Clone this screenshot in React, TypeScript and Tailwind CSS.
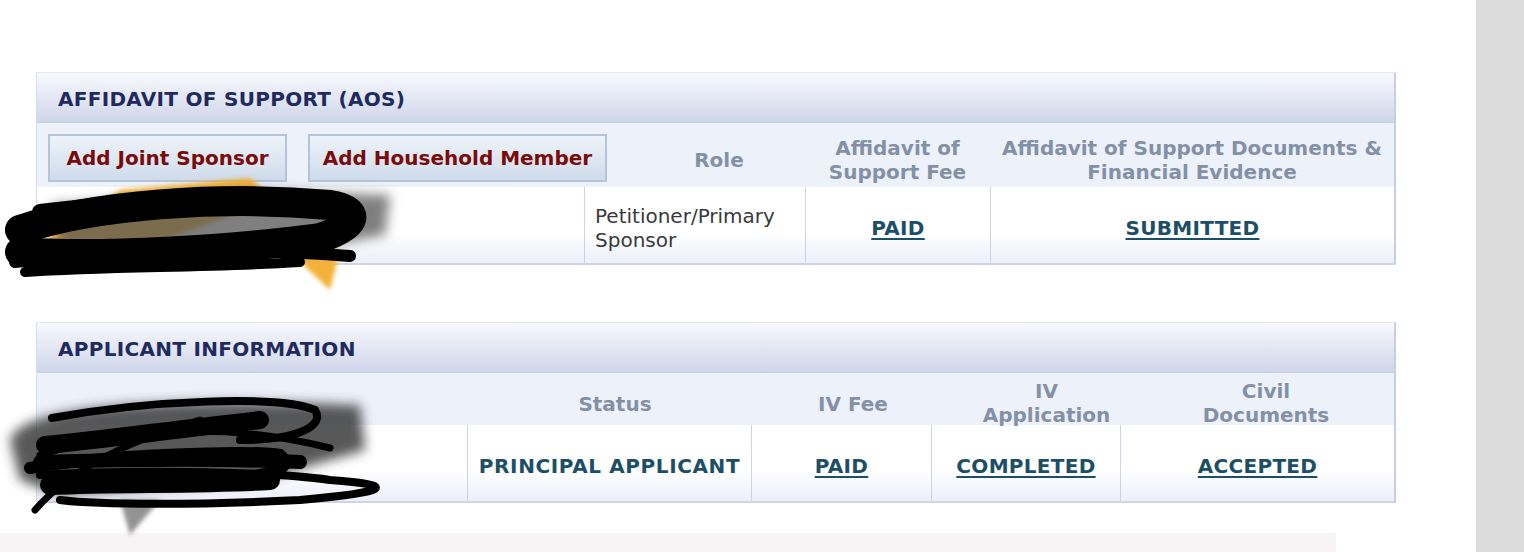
import React from 'react';

const font = "font-['DejaVu_Sans','Verdana',sans-serif]";

const Scribbles: React.FC = () => (
  <svg className="absolute left-0 top-0 pointer-events-none" width="1524" height="552" viewBox="0 0 1524 552">
    <defs>
      <filter id="soft" x="-20%" y="-50%" width="140%" height="200%">
        <feGaussianBlur stdDeviation="6" />
      </filter>
      <filter id="softer" x="-20%" y="-50%" width="140%" height="200%">
        <feGaussianBlur stdDeviation="2" />
      </filter>
    </defs>
    {/* first redaction */}
    <g>
      <path d="M30 250 L120 190 L250 178 L275 200 L80 270 Z" fill="#f3b33a" filter="url(#softer)" />
      <path d="M240 240 L340 250 L330 290 L300 262 Z" fill="#f3b33a" filter="url(#softer)" />
      <path d="M50 205 L250 190 L390 195 L385 235 L300 250 L60 250 Z" fill="#555" opacity="0.75" filter="url(#soft)" />
      <path d="M20 230 C90 205 220 195 330 205 C360 210 360 225 320 238 C230 250 100 258 20 252" stroke="#000" strokeWidth="30" fill="none" strokeLinecap="round" />
      <path d="M15 262 C120 250 250 248 350 256" stroke="#000" strokeWidth="12" fill="none" strokeLinecap="round" />
      <path d="M40 212 C150 198 260 195 340 210" stroke="#000" strokeWidth="16" fill="none" strokeLinecap="round" />
      <path d="M25 272 C110 266 200 268 300 262" stroke="#000" strokeWidth="10" fill="none" strokeLinecap="round" />
    </g>
    {/* second redaction */}
    <g>
      <path d="M10 440 C20 410 120 395 360 405 L365 450 L260 480 L60 495 L20 480 Z" fill="#3a3a3a" opacity="0.85" filter="url(#soft)" />
      <path d="M120 500 L160 500 L130 535 Z" fill="#666" opacity="0.7" filter="url(#softer)" />
      <path d="M52 418 C150 400 280 395 315 410 C325 425 300 440 240 440" stroke="#000" strokeWidth="8" fill="none" strokeLinecap="round" />
      <path d="M40 455 C120 430 220 420 330 448" stroke="#000" strokeWidth="7" fill="none" strokeLinecap="round" />
      <path d="M30 468 C100 455 250 450 280 455 C300 470 260 480 180 482" stroke="#000" strokeWidth="12" fill="none" strokeLinecap="round" />
      <path d="M40 475 C120 470 260 470 330 480 C400 485 390 492 300 500 C200 505 100 505 60 500" stroke="#000" strokeWidth="8" fill="none" strokeLinecap="round" />
      <path d="M35 510 C70 470 130 440 200 420" stroke="#000" strokeWidth="7" fill="none" strokeLinecap="round" />
      <path d="M45 445 C100 440 170 430 260 420" stroke="#000" strokeWidth="18" fill="none" strokeLinecap="round" />
      <path d="M50 485 C120 482 200 484 270 480" stroke="#000" strokeWidth="20" fill="none" strokeLinecap="round" />
      <path d="M40 462 C110 460 200 458 300 462" stroke="#000" strokeWidth="14" fill="none" strokeLinecap="round" />
    </g>
  </svg>
);

const SectionHeader: React.FC<{ title: string }> = ({ title }) => (
  <div className="h-[50px] flex items-center pt-[3px] pl-[21px] border-b border-[#c9d0e2] bg-gradient-to-b from-[#f8f9fd] to-[#cfd6ea]">
    <h2 className="text-[20px] font-bold text-[#1f2a5e] leading-none tracking-[0.3px]">{title}</h2>
  </div>
);

const Link: React.FC<{ children: React.ReactNode }> = ({ children }) => (
  <a className="text-[20px] font-bold text-[#1c4f66] tracking-[0.3px] underline underline-offset-[3px] decoration-2">{children}</a>
);

const JointButton: React.FC<{ label: string; w: string }> = ({ label, w }) => (
  <button className={`${w} h-[48px] border-2 border-[#b3c5d8] bg-gradient-to-b from-[#eef3f9] to-[#cfdceb] text-[20px] font-bold text-[#7b0b0b] text-center`}>
    {label}
  </button>
);

const ColHead: React.FC<{ children: React.ReactNode; className?: string }> = ({ children, className = '' }) => (
  <div className={`text-[20px] font-bold text-[#8391a6] leading-[24px] text-center ${className}`}>{children}</div>
);

const rowBg = 'bg-gradient-to-b from-white from-60% to-[#eceff9]';
const cell = 'border-l border-[#cdd3e0] flex items-center pt-[5px]';

export default function App() {
  return (
    <div className={`relative w-[1524px] h-[552px] bg-white overflow-hidden flex ${font}`}>
      <div className="flex-1 flex flex-col">
        <div className="pt-[72px] pl-[36px]">
          {/* Affidavit of Support */}
          <section className="w-[1360px] border-t border-[#e6e9f1] border-l border-l-[#d6dce8] border-r-2 border-r-[#c6cee0]">
            <SectionHeader title="AFFIDAVIT OF SUPPORT (AOS)" />
            <div className="h-[64px] bg-[#edf1fa] grid grid-cols-[596px_172px_185px_1fr] items-center">
              <div className="flex items-center gap-[21px] pl-[11px] pt-[6px]">
                <JointButton label="Add Joint Sponsor" w="w-[239px]" />
                <JointButton label="Add Household Member" w="w-[299px]" />
              </div>
              <ColHead className="pt-[10px]">Role</ColHead>
              <ColHead className="pt-[10px]">Affidavit of<br />Support Fee</ColHead>
              <ColHead className="pt-[10px]">Affidavit of Support Documents &amp;<br />Financial Evidence</ColHead>
            </div>
            <div className={`h-[78px] grid grid-cols-[547px_221px_185px_1fr] border-b-2 border-[#cfd5e4] ${rowBg}`}>
              <div />
              <div className={`${cell} pl-[10px] text-[20px] leading-[24px] text-[#3a3a3a]`}>
                Petitioner/Primary<br />Sponsor
              </div>
              <div className={`${cell} justify-center`}><Link>PAID</Link></div>
              <div className={`${cell} justify-center`}><Link>SUBMITTED</Link></div>
            </div>
          </section>

          {/* Applicant Information */}
          <section className="mt-[57px] w-[1360px] border-t border-[#e6e9f1] border-l border-l-[#d6dce8] border-r-2 border-r-[#c6cee0]">
            <SectionHeader title="APPLICANT INFORMATION" />
            <div className="h-[52px] bg-[#edf1fa] grid grid-cols-[430px_284px_180px_189px_1fr]">
              <div />
              <ColHead className="pl-[12px] pt-[19px]">Status</ColHead>
              <ColHead className="pl-[24px] pt-[19px]">IV Fee</ColHead>
              <ColHead className="relative z-10 pl-[42px] pt-[6px]">IV<br />Application</ColHead>
              <ColHead className="relative z-10 pl-[18px] pt-[6px]">Civil<br />Documents</ColHead>
            </div>
            <div className={`h-[78px] grid grid-cols-[430px_284px_180px_189px_1fr] border-b-2 border-[#cfd5e4] ${rowBg}`}>
              <div />
              <div className={`${cell} justify-center text-[20px] font-bold tracking-[0.6px] text-[#1c4f66]`}>
                PRINCIPAL APPLICANT
              </div>
              <div className={`${cell} justify-center`}><Link>PAID</Link></div>
              <div className={`${cell} justify-center`}><Link>COMPLETED</Link></div>
              <div className={`${cell} justify-center`}><Link>ACCEPTED</Link></div>
            </div>
          </section>
        </div>
        <div className="mt-[30px] h-[19px] w-[1336px] bg-[#f6f4f4]" />
      </div>
      <div className="w-[48px] bg-[#dcdcdc]" />
      <Scribbles />
    </div>
  );
}
